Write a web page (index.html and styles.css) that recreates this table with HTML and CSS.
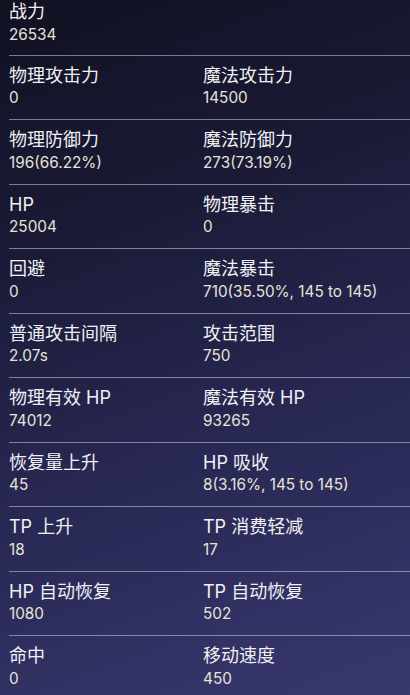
FILE: index.html
```html
<!DOCTYPE html>
<html lang="zh">
<head>
<meta charset="utf-8">
<title>Stats</title>
<link rel="stylesheet" href="styles.css">
</head>
<body>
<div class="stats">
  <div class="row row--first">
    <div class="cell"><div class="label">战力</div><div class="value">26534</div></div>
  </div>
  <div class="row">
    <div class="cell"><div class="label">物理攻击力</div><div class="value">0</div></div>
    <div class="cell"><div class="label">魔法攻击力</div><div class="value">14500</div></div>
  </div>
  <div class="row">
    <div class="cell"><div class="label">物理防御力</div><div class="value">196(66.22%)</div></div>
    <div class="cell"><div class="label">魔法防御力</div><div class="value">273(73.19%)</div></div>
  </div>
  <div class="row">
    <div class="cell"><div class="label">HP</div><div class="value">25004</div></div>
    <div class="cell"><div class="label">物理暴击</div><div class="value">0</div></div>
  </div>
  <div class="row">
    <div class="cell"><div class="label">回避</div><div class="value">0</div></div>
    <div class="cell"><div class="label">魔法暴击</div><div class="value">710(35.50%, 145 to 145)</div></div>
  </div>
  <div class="row">
    <div class="cell"><div class="label">普通攻击间隔</div><div class="value">2.07s</div></div>
    <div class="cell"><div class="label">攻击范围</div><div class="value">750</div></div>
  </div>
  <div class="row">
    <div class="cell"><div class="label">物理有效 HP</div><div class="value">74012</div></div>
    <div class="cell"><div class="label">魔法有效 HP</div><div class="value">93265</div></div>
  </div>
  <div class="row">
    <div class="cell"><div class="label">恢复量上升</div><div class="value">45</div></div>
    <div class="cell"><div class="label">HP 吸收</div><div class="value">8(3.16%, 145 to 145)</div></div>
  </div>
  <div class="row">
    <div class="cell"><div class="label">TP 上升</div><div class="value">18</div></div>
    <div class="cell"><div class="label">TP 消费轻减</div><div class="value">17</div></div>
  </div>
  <div class="row">
    <div class="cell"><div class="label">HP 自动恢复</div><div class="value">1080</div></div>
    <div class="cell"><div class="label">TP 自动恢复</div><div class="value">502</div></div>
  </div>
  <div class="row">
    <div class="cell"><div class="label">命中</div><div class="value">0</div></div>
    <div class="cell"><div class="label">移动速度</div><div class="value">450</div></div>
  </div>
</div>
</body>
</html>
```
FILE: styles.css
```css
html, body {
  margin: 0;
  padding: 0;
  height: 100%;
}
body {
  background: linear-gradient(160deg, #111122 0%, #1a1a36 30%, #272752 60%, #38386f 100%);
  font-family: Inter, "Noto Sans CJK SC", sans-serif;
  overflow: hidden;
}
.stats {
  display: flex;
  flex-direction: column;
}
.row {
  display: grid;
  grid-template-columns: 194px 1fr;
  margin-left: 9px;
  padding: 9px 0 12px;
  border-bottom: 1px solid rgba(210, 210, 225, 0.55);
}
.row--first {
  padding-top: 1px;
  padding-bottom: 11px;
}
.label {
  font-size: 18px;
  line-height: 22px;
  color: #f1f1f3;
}
.value {
  margin-top: 2.5px;
  font-size: 15.3px;
  line-height: 18px;
  color: #e7e3d8;
}
```
